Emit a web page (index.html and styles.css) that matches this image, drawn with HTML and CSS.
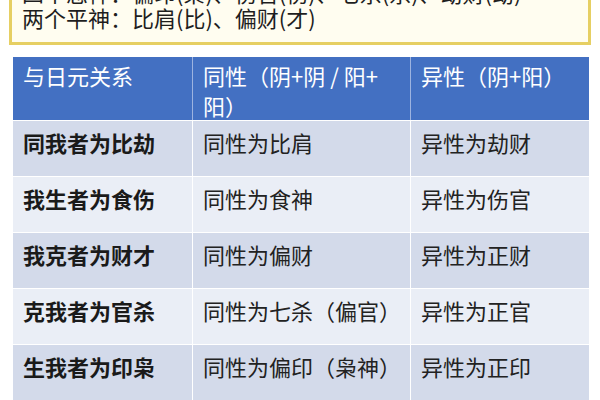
FILE: index.html
```html
<!DOCTYPE html>
<html lang="zh">
<head>
<meta charset="utf-8">
<link rel="stylesheet" href="styles.css">
</head>
<body>
<div class="note">
  <div class="note-line">四个忌神：偏印(枭)、伤官(伤)、七杀(杀)、劫财(劫)</div>
  <div class="note-line">两个平神：比肩(比)、偏财(才)</div>
</div>
<div class="table">
  <div class="row head">
    <div class="cell">与日元关系</div>
    <div class="cell">同性（阴+阴 / 阳+<br>阳）</div>
    <div class="cell">异性（阴+阳）</div>
  </div>
  <div class="row odd">
    <div class="cell key">同我者为比劫</div>
    <div class="cell">同性为比肩</div>
    <div class="cell">异性为劫财</div>
  </div>
  <div class="row even">
    <div class="cell key">我生者为食伤</div>
    <div class="cell">同性为食神</div>
    <div class="cell">异性为伤官</div>
  </div>
  <div class="row odd">
    <div class="cell key">我克者为财才</div>
    <div class="cell">同性为偏财</div>
    <div class="cell">异性为正财</div>
  </div>
  <div class="row even">
    <div class="cell key">克我者为官杀</div>
    <div class="cell">同性为七杀（偏官）</div>
    <div class="cell">异性为正官</div>
  </div>
  <div class="row odd">
    <div class="cell key">生我者为印枭</div>
    <div class="cell">同性为偏印（枭神）</div>
    <div class="cell">异性为正印</div>
  </div>
</div>
</body>
</html>
```
FILE: styles.css
```css
html, body {
  margin: 0;
  padding: 0;
  background: #ffffff;
  overflow: hidden;
}
body {
  font-family: "Noto Sans CJK SC", "Noto Sans", sans-serif;
  color: #222;
}
.note {
  margin: -23px 9px 0 9px;
  padding: 0 10px 12px 10px;
  border: 3px solid #e6cf63;
  background: #fffdf0;
  font-size: 22px;
  line-height: 25px;
  color: #1e1e1e;
}
.table {
  margin: 12px 11px 0 13px;
  display: flex;
  flex-direction: column;
}
.row {
  display: grid;
  grid-template-columns: 179px 218px 179px;
  height: 55px;
  border-top: 1px solid #ffffff;
}
.row.head {
  height: 63px;
  border-top: 0;
  background: #4370c2;
  color: #ffffff;
}
.row.odd { background: #d3daea; }
.row.even { background: #eaeef6; }
.cell {
  padding: 6px 8px 0 10px;
  font-size: 22px;
  line-height: 30px;
  border-left: 1px solid #ffffff;
}
.head .cell {
  padding-top: 3px;
  border-left-color: #9db3e0;
}
.cell:first-child { border-left: 0; padding-left: 10px; }
.cell.key { font-weight: bold; color: #1a1a1a; }
```
